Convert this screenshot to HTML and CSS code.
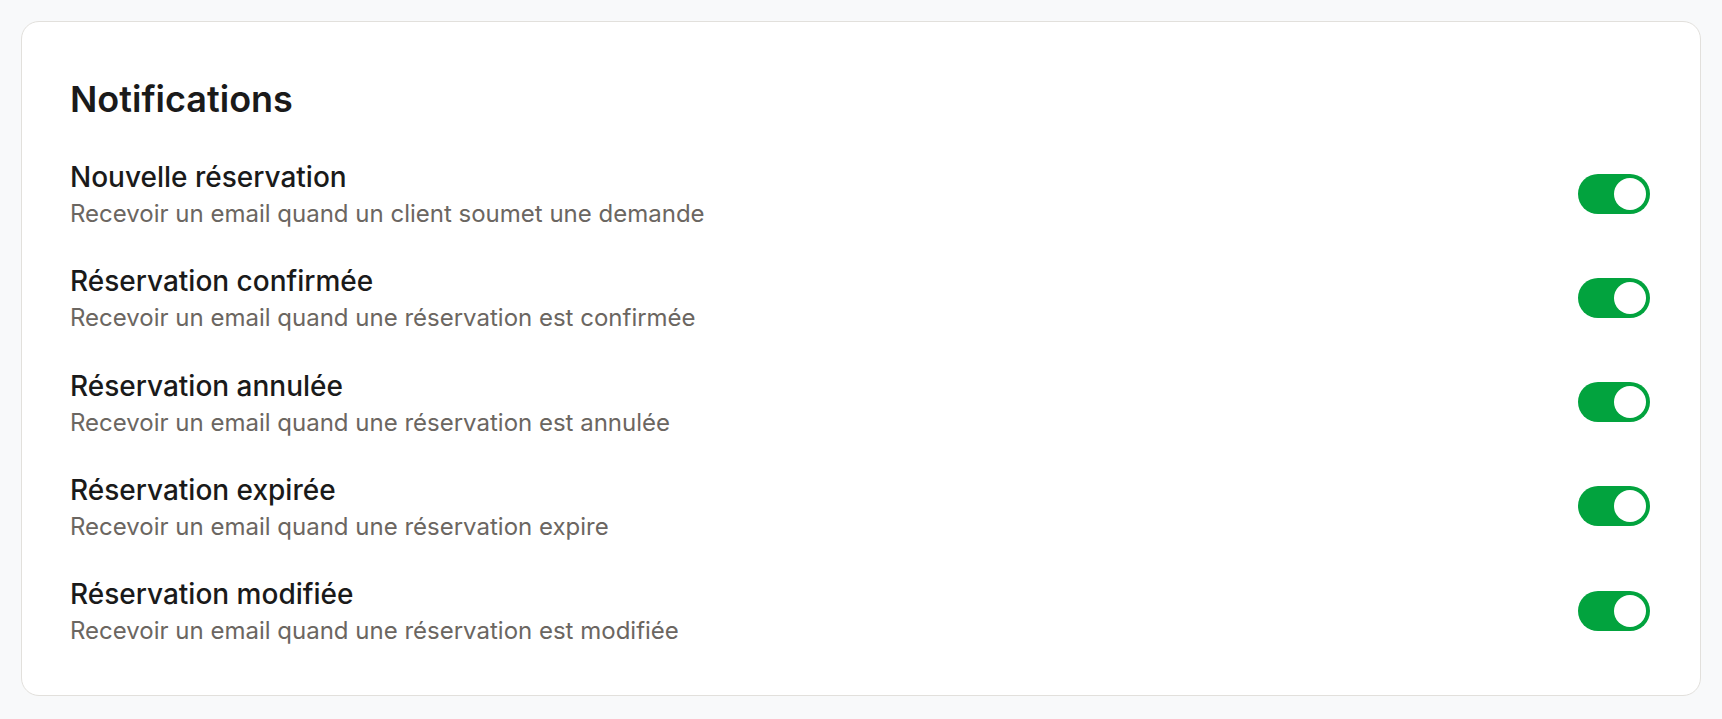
FILE: index.html
```html
<!DOCTYPE html>
<html lang="fr">
<head>
    <meta charset="UTF-8">
    <meta name="viewport" content="width=device-width, initial-scale=1.0">
    <title>Notifications</title>
    <link rel="stylesheet" href="styles.css">
</head>
<body>
    <main class="page">
        <section class="card">
            <h2>Notifications</h2>
            <div class="settings">
                <div class="setting">
                    <div class="setting-text">
                        <h3>Nouvelle réservation</h3>
                        <p>Recevoir un email quand un client soumet une demande</p>
                    </div>
                    <span class="toggle on"><span class="knob"></span></span>
                </div>
                <div class="setting">
                    <div class="setting-text">
                        <h3>Réservation confirmée</h3>
                        <p>Recevoir un email quand une réservation est confirmée</p>
                    </div>
                    <span class="toggle on"><span class="knob"></span></span>
                </div>
                <div class="setting">
                    <div class="setting-text">
                        <h3>Réservation annulée</h3>
                        <p>Recevoir un email quand une réservation est annulée</p>
                    </div>
                    <span class="toggle on"><span class="knob"></span></span>
                </div>
                <div class="setting">
                    <div class="setting-text">
                        <h3>Réservation expirée</h3>
                        <p>Recevoir un email quand une réservation expire</p>
                    </div>
                    <span class="toggle on"><span class="knob"></span></span>
                </div>
                <div class="setting">
                    <div class="setting-text">
                        <h3>Réservation modifiée</h3>
                        <p>Recevoir un email quand une réservation est modifiée</p>
                    </div>
                    <span class="toggle on"><span class="knob"></span></span>
                </div>
            </div>
        </section>
    </main>
</body>
</html>
```

FILE: styles.css
```css
/* reset */
* {
    margin: 0;
    padding: 0;
    box-sizing: border-box;
}

body {
    font-family: 'Inter', 'Noto Sans', sans-serif;
    background-color: #f8f9fa;
    color: #1a1a1a;
}

.page {
    padding: 21px;
}

/* carte */
.card {
    background: #fff;
    border: 1px solid #e2e0dc;
    border-radius: 18px;
    padding: 48px;
}

.card h2 {
    font-size: 36px;
    line-height: 54px;
    font-weight: 600;
    margin-top: 2px;
    margin-bottom: 31px;
}

.settings {
    display: flex;
    flex-direction: column;
    gap: 31.3px;
}

.setting {
    display: flex;
    justify-content: space-between;
    align-items: center;
}

.setting h3 {
    font-size: 28px;
    line-height: 40px;
    font-weight: 500;
}

.setting p {
    font-size: 24px;
    line-height: 33px;
    color: #6b6661;
}

/* interrupteur */
.toggle {
    display: flex;
    align-items: center;
    width: 72px;
    height: 40px;
    border-radius: 20px;
    padding: 4px;
    background: #d6d6d6;
    margin-right: 2px;
}

.toggle.on {
    background: #02a33e;
    justify-content: flex-end;
}

.knob {
    width: 32px;
    height: 32px;
    border-radius: 50%;
    background: #fff;
}
```
